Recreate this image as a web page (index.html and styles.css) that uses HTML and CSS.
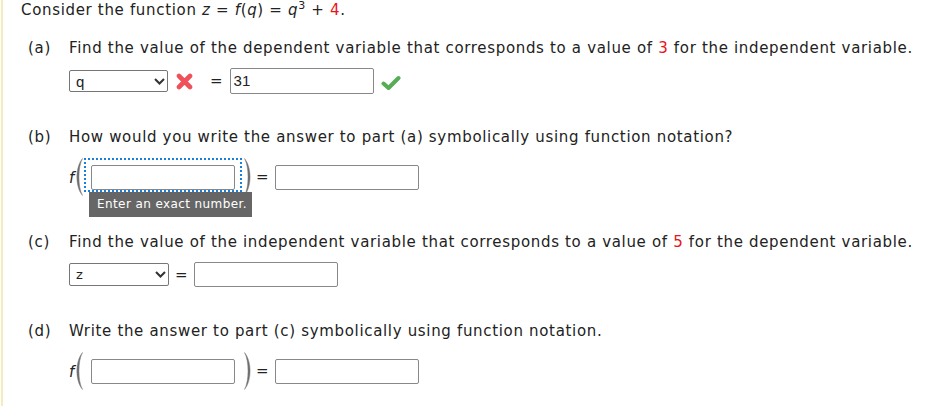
FILE: index.html
```html
<!DOCTYPE html>
<html>
<head>
<meta charset="utf-8">
<link rel="stylesheet" href="styles.css">
</head>
<body>
<div class="page">
  <p class="intro">Consider the function <i>z</i> = <i>f</i>(<i>q</i>) = <i>q</i><sup>3</sup> + <span class="red">4</span>.</p>

  <section class="part part-a">
    <div class="q"><span class="lbl">(a)</span><span class="txt">Find the value of the dependent variable that corresponds to a value of <span class="red">3</span> for the independent variable.</span></div>
    <div class="ans">
      <span class="sel sel-a"><span class="sel-val">q</span><svg class="chev" width="11" height="7" viewBox="0 0 11 7"><path d="M1 1 L5.5 5.5 L10 1" fill="none" stroke="#333" stroke-width="2"/></svg></span>
      <svg class="xmark" width="17" height="17" viewBox="0 0 17 17"><path d="M3 3 L14 14 M14 3 L3 14" stroke="#f0505a" stroke-width="4.6" stroke-linecap="round"/></svg>
      <span class="eq eq-a">=</span>
      <span class="box filled">31</span>
      <svg class="check" width="20" height="16" viewBox="0 0 20 16"><path d="M2.5 8.5 L7.5 13 L17.5 3" fill="none" stroke="#55ad55" stroke-width="4" stroke-linecap="round" stroke-linejoin="round"/></svg>
    </div>
  </section>

  <section class="part part-b">
    <div class="q"><span class="lbl">(b)</span><span class="txt">How would you write the answer to part (a) symbolically using function notation?</span></div>
    <div class="ans fn-row">
      <i class="fn">f</i>
      <svg class="paren" width="10" height="38" viewBox="0 0 10 38"><path d="M8.5 0.5 C1 9 1 29 8.5 37.5 C3.8 29 3.8 9 8.5 0.5 Z" fill="#6a6a6a" stroke="#888" stroke-width="0.5"/></svg>
      <span class="slot focused"><span class="box"></span><span class="tip">Enter an exact number.</span></span>
      <svg class="paren" width="10" height="38" viewBox="0 0 10 38"><path d="M1.5 0.5 C9 9 9 29 1.5 37.5 C6.2 29 6.2 9 1.5 0.5 Z" fill="#6a6a6a" stroke="#888" stroke-width="0.5"/></svg>
      <span class="eq eq-f">=</span>
      <span class="box"></span>
    </div>
  </section>

  <section class="part part-c">
    <div class="q"><span class="lbl">(c)</span><span class="txt">Find the value of the independent variable that corresponds to a value of <span class="red">5</span> for the dependent variable.</span></div>
    <div class="ans">
      <span class="sel sel-c"><span class="sel-val">z</span><svg class="chev" width="11" height="7" viewBox="0 0 11 7"><path d="M1 1 L5.5 5.5 L10 1" fill="none" stroke="#333" stroke-width="2"/></svg></span>
      <span class="eq eq-c">=</span>
      <span class="box"></span>
    </div>
  </section>

  <section class="part part-d">
    <div class="q"><span class="lbl">(d)</span><span class="txt">Write the answer to part (c) symbolically using function notation.</span></div>
    <div class="ans fn-row">
      <i class="fn">f</i>
      <svg class="paren" width="10" height="38" viewBox="0 0 10 38"><path d="M8.5 0.5 C1 9 1 29 8.5 37.5 C3.8 29 3.8 9 8.5 0.5 Z" fill="#6a6a6a" stroke="#888" stroke-width="0.5"/></svg>
      <span class="slot"><span class="box"></span></span>
      <svg class="paren" width="10" height="38" viewBox="0 0 10 38"><path d="M1.5 0.5 C9 9 9 29 1.5 37.5 C6.2 29 6.2 9 1.5 0.5 Z" fill="#6a6a6a" stroke="#888" stroke-width="0.5"/></svg>
      <span class="eq eq-f">=</span>
      <span class="box"></span>
    </div>
  </section>
</div>
</body>
</html>
```

FILE: styles.css
```css
html, body {
  margin: 0;
  padding: 0;
  background: #fff;
}
body {
  font-family: "DejaVu Sans", Verdana, sans-serif;
  font-size: 15px;
  letter-spacing: 0.67px;
  color: #222;
}
.page {
  margin-left: 1px;
  border-left: 2px solid #f3edbe;
  min-height: 406px;
  box-sizing: border-box;
}
.red { color: #e8141b; }
.intro {
  margin: 0;
  padding-left: 18px;
  line-height: 20px;
}
.intro sup {
  font-size: 11px;
  line-height: 0;
  vertical-align: 6px;
}
.part { padding-left: 25px; }
.q {
  display: flex;
  line-height: 20px;
}
.lbl { width: 41px; flex: none; }
.ans {
  display: flex;
  align-items: center;
  margin-left: 41px;
  letter-spacing: 0;
}
.part-a { margin-top: 18px; }
.part-a .ans { margin-top: 10px; height: 26px; }
.part-b { margin-top: 33px; }
.part-b .ans { margin-top: 11px; height: 38px; }
.part-c { margin-top: 36px; }
.part-c .ans { margin-top: 10px; height: 25px; }
.part-d { margin-top: 34px; }
.part-d .ans { margin-top: 11px; height: 38px; }

.box {
  display: inline-block;
  box-sizing: border-box;
  width: 144px;
  height: 25px;
  border: 1px solid #888;
  border-radius: 2px;
  background: #fff;
  flex: none;
}
.part-a .box { height: 26px; }
.box.filled {
  font-family: "Liberation Sans", Arial, sans-serif;
  font-size: 15px;
  color: #222;
  line-height: 24px;
  padding-left: 3px;
}
.sel {
  display: flex;
  align-items: center;
  justify-content: space-between;
  box-sizing: border-box;
  width: 100px;
  height: 22px;
  border: 1px solid #767676;
  border-radius: 2px;
  padding: 0 2px 0 6px;
  font-family: "Liberation Sans", Arial, sans-serif;
  font-size: 15px;
  color: #222;
}
.sel-a { width: 99px; }
.sel-c { height: 23px; font-family: "DejaVu Sans", sans-serif; font-size: 13px; }
.chev { flex: none; }
.xmark { margin-left: 8px; flex: none; }
.eq { flex: none; }
.eq-a { margin-left: 17px; margin-right: 7px; }
.eq-c { margin-left: 6px; margin-right: 6px; }
.eq-f { margin-left: 3px; margin-right: 6px; }
.check { margin-left: 7px; margin-top: 4px; flex: none; }

.fn-row { align-items: center; }
.fn {
  width: 5px;
  flex: none;
  margin-top: 2px;
  font-size: 15px;
}
.paren { flex: none; }
.slot {
  position: relative;
  display: flex;
  align-items: center;
  height: 38px;
  padding-left: 7px;
  padding-right: 8px;
  flex: none;
}
.focused::before {
  content: "";
  position: absolute;
  left: 0;
  right: 1px;
  top: 0;
  bottom: 4px;
  border: 2px dotted #1780dc;
}
.focused .box { position: relative; }
.tip {
  position: absolute;
  left: 5px;
  top: 34px;
  width: 163px;
  height: 25px;
  box-sizing: border-box;
  background: #666;
  color: #fff;
  font-size: 12px;
  letter-spacing: 0.4px;
  line-height: 25px;
  padding-left: 8px;
  white-space: nowrap;
  z-index: 2;
}
```
